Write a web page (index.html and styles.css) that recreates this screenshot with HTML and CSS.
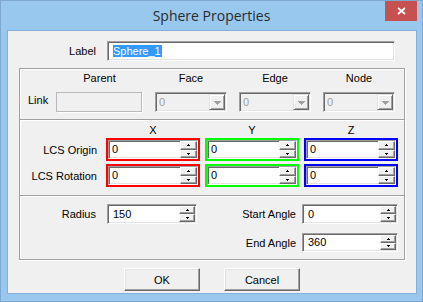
FILE: index.html
```html
<!DOCTYPE html>
<html>
<head>
<meta charset="utf-8">
<title>Sphere Properties</title>
<link rel="stylesheet" href="styles.css">
</head>
<body>
<div class="window">
  <div class="titlebar">
    <div class="title">Sphere Properties</div>
    <div class="close"><svg width="9" height="8" viewBox="0 0 9 8"><path d="M1 1L8 7M8 1L1 7" stroke="#fff" stroke-width="1.7" fill="none"/></svg></div>
  </div>
  <div class="client">
    <div class="label-row">
      <span class="lbl">Label</span>
      <div class="field name-field"><span class="sel">Sphere_1</span></div>
    </div>

    <div class="group g-link">
      <div class="link-row hdr-row">
        <span></span><span class="hdr">Parent</span><span class="hdr">Face</span><span class="hdr">Edge</span><span class="hdr">Node</span>
      </div>
      <div class="link-row ctl-row">
        <span class="link-lbl">Link</span>
        <div class="flatbox"></div>
        <div class="field combo"><span class="val dis">0</span><span class="drop"><svg width="7" height="4" viewBox="0 0 7 4"><path d="M0 0h7v1H6v1H5v1H4v1H3V3H2V2H1V1H0z" fill="#a0a0a0"/></svg></span></div>
        <div class="field combo"><span class="val dis">0</span><span class="drop"><svg width="7" height="4" viewBox="0 0 7 4"><path d="M0 0h7v1H6v1H5v1H4v1H3V3H2V2H1V1H0z" fill="#a0a0a0"/></svg></span></div>
        <div class="field combo"><span class="val dis">0</span><span class="drop"><svg width="7" height="4" viewBox="0 0 7 4"><path d="M0 0h7v1H6v1H5v1H4v1H3V3H2V2H1V1H0z" fill="#a0a0a0"/></svg></span></div>
      </div>
    </div>

    <div class="group g-lcs">
      <div class="lcs-row hdr-row">
        <span></span><span class="hdr">X</span><span class="hdr">Y</span><span class="hdr">Z</span>
      </div>
      <div class="lcs-row r1">
        <span class="rowlbl">LCS Origin</span>
        <div class="tint red"><div class="field spinfield"><span class="val">0</span><span class="spin"><span class="sb"><svg width="3" height="2" viewBox="0 0 3 2"><path d="M1 0h1v1h1v1H0V1h1z"/></svg></span><span class="sb"><svg width="3" height="2" viewBox="0 0 3 2"><path d="M0 0h3v1H2v1H1V1H0z"/></svg></span></span></div></div>
        <div class="tint green"><div class="field spinfield"><span class="val">0</span><span class="spin"><span class="sb"><svg width="3" height="2" viewBox="0 0 3 2"><path d="M1 0h1v1h1v1H0V1h1z"/></svg></span><span class="sb"><svg width="3" height="2" viewBox="0 0 3 2"><path d="M0 0h3v1H2v1H1V1H0z"/></svg></span></span></div></div>
        <div class="tint blue"><div class="field spinfield"><span class="val">0</span><span class="spin"><span class="sb"><svg width="3" height="2" viewBox="0 0 3 2"><path d="M1 0h1v1h1v1H0V1h1z"/></svg></span><span class="sb"><svg width="3" height="2" viewBox="0 0 3 2"><path d="M0 0h3v1H2v1H1V1H0z"/></svg></span></span></div></div>
      </div>
      <div class="lcs-row r2">
        <span class="rowlbl">LCS Rotation</span>
        <div class="tint red"><div class="field spinfield"><span class="val">0</span><span class="spin"><span class="sb"><svg width="3" height="2" viewBox="0 0 3 2"><path d="M1 0h1v1h1v1H0V1h1z"/></svg></span><span class="sb"><svg width="3" height="2" viewBox="0 0 3 2"><path d="M0 0h3v1H2v1H1V1H0z"/></svg></span></span></div></div>
        <div class="tint green"><div class="field spinfield"><span class="val">0</span><span class="spin"><span class="sb"><svg width="3" height="2" viewBox="0 0 3 2"><path d="M1 0h1v1h1v1H0V1h1z"/></svg></span><span class="sb"><svg width="3" height="2" viewBox="0 0 3 2"><path d="M0 0h3v1H2v1H1V1H0z"/></svg></span></span></div></div>
        <div class="tint blue"><div class="field spinfield"><span class="val">0</span><span class="spin"><span class="sb"><svg width="3" height="2" viewBox="0 0 3 2"><path d="M1 0h1v1h1v1H0V1h1z"/></svg></span><span class="sb"><svg width="3" height="2" viewBox="0 0 3 2"><path d="M0 0h3v1H2v1H1V1H0z"/></svg></span></span></div></div>
      </div>
    </div>

    <div class="group g-sphere last">
      <div class="sph-row s1">
        <span class="rowlbl l1">Radius</span>
        <div class="field spinfield plain"><span class="val">150</span><span class="spin"><span class="sb"><svg width="3" height="2" viewBox="0 0 3 2"><path d="M1 0h1v1h1v1H0V1h1z"/></svg></span><span class="sb"><svg width="3" height="2" viewBox="0 0 3 2"><path d="M0 0h3v1H2v1H1V1H0z"/></svg></span></span></div>
        <span class="rowlbl l2">Start Angle</span>
        <div class="field spinfield plain"><span class="val">0</span><span class="spin"><span class="sb"><svg width="3" height="2" viewBox="0 0 3 2"><path d="M1 0h1v1h1v1H0V1h1z"/></svg></span><span class="sb"><svg width="3" height="2" viewBox="0 0 3 2"><path d="M0 0h3v1H2v1H1V1H0z"/></svg></span></span></div>
      </div>
      <div class="sph-row s2">
        <span></span><span></span>
        <span class="rowlbl l2">End Angle</span>
        <div class="field spinfield plain"><span class="val">360</span><span class="spin"><span class="sb"><svg width="3" height="2" viewBox="0 0 3 2"><path d="M1 0h1v1h1v1H0V1h1z"/></svg></span><span class="sb"><svg width="3" height="2" viewBox="0 0 3 2"><path d="M0 0h3v1H2v1H1V1H0z"/></svg></span></span></div>
      </div>
    </div>

    <div class="buttons">
      <div class="btn">OK</div>
      <div class="btn">Cancel</div>
    </div>
  </div>
</div>
</body>
</html>
```

FILE: styles.css
```css
* { box-sizing: border-box; }
html, body { margin: 0; padding: 0; }
body {
  width: 423px;
  height: 302px;
  overflow: hidden;
  font-family: "Liberation Sans", Arial, sans-serif;
  font-size: 11px;
  color: #000;
}
.window {
  width: 423px;
  height: 302px;
  background: #99c8ef;
  border: 1px solid #7ea8d2;
  display: flex;
  flex-direction: column;
}
.titlebar {
  height: 29px;
  flex: none;
  display: grid;
  grid-template-columns: 1fr auto 1fr;
  align-items: center;
}
.title {
  grid-column: 2;
  font-family: "Open Sans", "Noto Sans", sans-serif;
  font-size: 14px;
  color: #2b2b2b;
  white-space: nowrap;
}
.close {
  grid-column: 3;
  justify-self: end;
  align-self: start;
  width: 32px;
  height: 20px;
  margin-right: 5px;
  background: #c75050;
  display: flex;
  align-items: center;
  justify-content: center;
}
.close svg { display: block; }
.client {
  margin: 0 5px 0 6px;
  height: 264px;
  border: 1px solid #83b0da;
  background: #f0f0f0;
  padding-top: 10px;
}

/* generic sunken field */
.field {
  background: #fff;
  border: 1px solid;
  border-color: #a0a0a0 #fff #fff #a0a0a0;
  box-shadow: inset 1px 1px 0 #696969, inset -1px -1px 0 #e3e3e3;
  display: flex;
  align-items: center;
  line-height: 13px;
}
.label-row {
  display: flex;
  align-items: center;
  height: 20px;
}
.lbl {
  width: 88px;
  text-align: right;
  margin-right: 11px;
}
.name-field {
  width: 288px;
  height: 20px;
  padding-left: 5px;
}
.sel {
  background: #3399ff;
  color: #fff;
  line-height: 12px;
  padding-right: 1px;
}

/* group boxes */
.group {
  margin: 0 11px;
  border: 1px solid #a0a0a0;
  border-bottom: none;
  box-shadow: inset 1px 1px 0 #fff, 1px 1px 0 #fff;
}
.group.last { border-bottom: 1px solid #a0a0a0; }
.g-link { margin-top: 7px; padding: 3px 0 7px; }
.hdr { text-align: center; line-height: 13px; }
.link-row {
  display: grid;
  grid-template-columns: 24px 87px 72px 72px 72px;
  column-gap: 12px;
}
.link-row.hdr-row { height: 13px; }
.link-row.ctl-row { height: 20px; margin-top: 7px; }
.link-lbl { padding-left: 8px; align-self: center; line-height: 13px; margin-top: -4px; }
.flatbox {
  border: 1px solid #b9b9b9;
  box-shadow: 1px 1px 0 #fff;
  background: #f0f0f0;
  width: 86px;
}
.combo {
  background: #f0f0f0;
  padding: 1px 1px 1px 3px;
}
.val { flex: 1; }
.dis { color: #a0a0a0; }
.drop {
  width: 16px;
  height: 16px;
  background: #f0f0f0;
  border: 1px solid;
  border-color: #e3e3e3 #696969 #696969 #e3e3e3;
  box-shadow: inset 1px 1px 0 #fff, inset -1px -1px 0 #a0a0a0;
  display: flex;
  align-items: center;
  justify-content: center;
}
.drop svg { display: block; margin-top: 1px; }

/* LCS group */
.g-lcs { padding: 4px 0 8px; }
.lcs-row {
  display: grid;
  grid-template-columns: 81px 94px 94px 94px;
  column-gap: 5px;
}
.lcs-row.hdr-row { height: 13px; }
.lcs-row.r1 { margin-top: 1px; height: 23px; }
.lcs-row.r2 { margin-top: 3px; height: 23px; }
.rowlbl {
  display: flex;
  align-items: center;
  justify-content: flex-end;
  padding-right: 4px;
  white-space: nowrap;
}
.tint { border: 2px solid; }
.tint.red { border-color: #ff0000; }
.tint.green { border-color: #00ff00; }
.tint.blue { border-color: #0000ff; }
.spinfield {
  height: 19px;
  padding: 0 0 0 3px;
  align-items: stretch;
}
.spinfield .val { align-self: center; }
.spin {
  width: 17px;
  display: flex;
  flex-direction: column;
}
.sb {
  flex: 1;
  background: #f0f0f0;
  border: 1px solid;
  border-color: #fff #696969 #696969 #fff;
  box-shadow: inset -1px -1px 0 #a0a0a0;
  display: flex;
  align-items: center;
  justify-content: center;
}
.sb svg { display: block; }

/* sphere group */
.g-sphere { padding: 8px 6px 7px 0; }
.sph-row {
  display: grid;
  grid-template-columns: 87px 90px 1fr 96px;
}
.sph-row.s1 { height: 20px; }
.sph-row.s2 { height: 19px; margin-top: 9px; }
.rowlbl.l1 { padding-right: 11px; }
.rowlbl.l2 { padding-right: 6px; }
.spinfield.plain { height: 100%; padding: 1px 1px 1px 5px; }
.spinfield.plain .spin { width: 16px; }

/* buttons */
.buttons {
  margin-top: 8px;
  display: flex;
  justify-content: center;
  gap: 24px;
}
.btn {
  width: 76px;
  height: 23px;
  background: #f0f0f0;
  border: 1px solid;
  border-color: #fff #696969 #696969 #fff;
  box-shadow: inset -1px -1px 0 #a0a0a0, inset 1px 1px 0 #e3e3e3;
  display: flex;
  align-items: center;
  justify-content: center;
}
```
